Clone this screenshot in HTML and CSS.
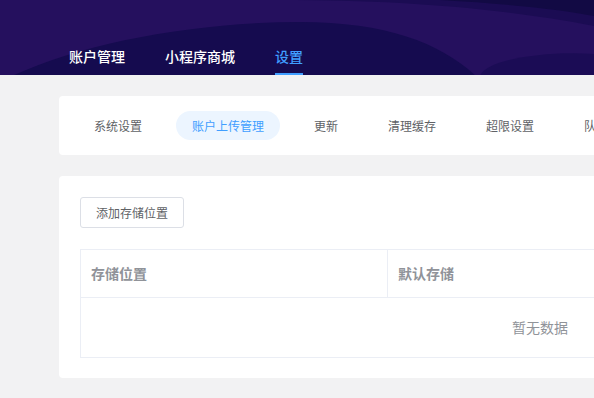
FILE: index.html
```html
<!DOCTYPE html>
<html lang="zh-CN">
<head>
  <meta charset="UTF-8">
  <meta name="viewport" content="width=device-width, initial-scale=1">
  <title>设置</title>
  <link rel="stylesheet" href="styles.css">
</head>
<body>
  <div class="page">
    <div class="header">
      <!-- decorative background waves -->
      <svg class="header-bg" viewBox="0 0 594 75" preserveAspectRatio="none">
        <rect width="594" height="75" fill="#25105e"/>
        <path d="M280 0 C400 0 500 8 594 26 L594 0 Z" fill="#1b0c53"/>
        <path d="M440 0 C510 4 565 10 594 16 L594 0 Z" fill="#120a44"/>
        <path d="M0 82 C70 45 190 22 300 22 C390 22 445 45 480 80 Z" fill="#150b4f"/>
        <path d="M480 80 C475 62 540 50 594 54 L594 80 Z" fill="#1b0c55"/>
      </svg>
      <div class="nav">
        <div class="nav-item">账户管理</div>
        <div class="nav-item">小程序商城</div>
        <div class="nav-item active">设置</div>
      </div>
    </div>

    <div class="main">
      <div class="card tabs-card">
        <div class="tab">系统设置</div>
        <div class="tab active">账户上传管理</div>
        <div class="tab">更新</div>
        <div class="tab">清理缓存</div>
        <div class="tab">超限设置</div>
        <div class="tab">队列设置</div>
      </div>

      <div class="card content-card">
        <button class="btn">添加存储位置</button>
        <div class="table">
          <div class="thead">
            <div class="th">存储位置</div>
            <div class="th">默认存储</div>
            <div class="th">操作</div>
          </div>
          <div class="empty">暂无数据</div>
        </div>
      </div>
    </div>
  </div>
</body>
</html>
```

FILE: styles.css
```css
body {
  margin: 0;
  font-family: "Noto Sans CJK SC", "Liberation Sans", sans-serif;
  background: #f2f2f3;
  color: #606266;
}
.page {
  overflow: hidden;
  height: 398px;
}
.header {
  position: relative;
  height: 75px;
  box-sizing: border-box;
  padding: 46px 0 0 69px;
}
.header-bg {
  position: absolute;
  left: 0;
  top: 0;
  width: 100%;
  height: 100%;
}
.nav {
  position: relative;
  display: flex;
  gap: 40px;
}
.nav-item {
  font-size: 14px;
  line-height: 20px;
  font-weight: 500;
  color: #fff;
  padding-bottom: 7px;
  border-bottom: 2px solid transparent;
}
.nav-item.active {
  color: #409eff;
  border-bottom-color: #409eff;
}
.main {
  padding: 21px 0 0 59px;
  width: 962px;
}
.card {
  background: #fff;
  border-radius: 4px;
}
.tabs-card {
  display: flex;
  gap: 18px;
  padding: 15px 19px;
}
.tab {
  font-size: 12px;
  line-height: 29px;
  padding: 0 16px;
  border-radius: 15px;
  white-space: nowrap;
  color: #606266;
}
.tab.active {
  background: #ecf5ff;
  color: #409eff;
}
.content-card {
  margin-top: 21px;
  padding: 21px 21px 20px;
}
.btn {
  display: block;
  font-family: inherit;
  font-size: 12px;
  line-height: 13px;
  padding: 8px 15px;
  color: #606266;
  background: #fff;
  border: 1px solid #dcdfe6;
  border-radius: 3px;
}
.table {
  margin-top: 21px;
  border: 1px solid #ebeef5;
  font-size: 14px;
}
.thead {
  display: grid;
  grid-template-columns: 307px 307px 304px;
}
.th {
  height: 48px;
  box-sizing: border-box;
  padding: 0 10px;
  line-height: 47px;
  font-weight: bold;
  color: #909399;
  border-bottom: 1px solid #ebeef5;
  border-right: 1px solid #ebeef5;
}
.th:last-child {
  border-right: none;
}
.empty {
  height: 59px;
  line-height: 59px;
  text-align: center;
  color: #909399;
}
```
